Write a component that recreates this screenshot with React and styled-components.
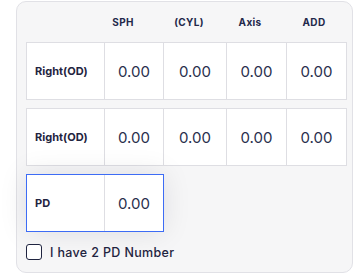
import React from "react";
import styled, { createGlobalStyle } from "styled-components";

const Global = createGlobalStyle`
  html, body { margin: 0; padding: 0; background: #ffffff; }
  body { font-family: Inter, "Noto Sans", sans-serif; color: #1f2440; }
`;

const Card = styled.div`
  box-sizing: border-box;
  margin: 1px 0 0 16px;
  width: 337px;
  height: 272px;
  border: 1px solid #e1e1e6;
  border-radius: 10px;
  background: #f6f6f7;
  padding: 0 5px 0 9px;
  display: flex;
  flex-direction: column;
`;

const HeaderRow = styled.div`
  display: grid;
  grid-template-columns: 64px 66px 66px 56px 72px;
  height: 40px;
  align-items: center;
`;

const HeadCell = styled.div`
  text-align: center;
  font-size: 10px;
  font-weight: 700;
  color: #23284a;
  letter-spacing: 0.3px;
`;

const Rows = styled.div`
  display: flex;
  flex-direction: column;
  gap: 8px;
`;

const Row = styled.div`
  box-sizing: border-box;
  display: grid;
  grid-template-columns: ${(p) => (p.$pd ? "77px 59px" : "77px 59px 63px 60px 60px")};
  width: ${(p) => (p.$pd ? "138px" : "321px")};
  height: 58px;
  background: #ffffff;
  border: 1px solid ${(p) => (p.$pd ? "#3d6cf5" : "#dedee3")};
  box-shadow: ${(p) => (p.$pd ? "0 0 28px rgba(20, 20, 40, 0.10)" : "none")};
`;

const LabelCell = styled.div`
  display: flex;
  align-items: center;
  padding-left: 8px;
  font-size: 11px;
  font-weight: 700;
  color: #1f2440;
`;

const ValueCell = styled.div`
  display: flex;
  align-items: center;
  justify-content: center;
  border-left: 1px solid #dedee3;
  font-size: 15px;
  font-weight: 400;
  color: #2a2f4d;
`;

const CheckRow = styled.label`
  display: flex;
  align-items: center;
  gap: 8px;
  margin-top: 12px;
  font-size: 12.5px;
  font-weight: 500;
  color: #1f2440;
  letter-spacing: 0.35px;
`;

const Box = styled.span`
  box-sizing: border-box;
  width: 16px;
  height: 16px;
  border: 1.5px solid #1f2440;
  border-radius: 3px;
  background: #ffffff;
`;

const cols = ["SPH", "(CYL)", "Axis", "ADD"];

export default function App() {
  return (
    <>
      <Global />
      <Card>
        <HeaderRow>
          <HeadCell />
          {cols.map((c) => (
            <HeadCell key={c}>{c}</HeadCell>
          ))}
        </HeaderRow>
        <Rows>
          {[0, 1].map((r) => (
            <Row key={r}>
              <LabelCell>Right(OD)</LabelCell>
              {cols.map((c) => (
                <ValueCell key={c}>0.00</ValueCell>
              ))}
            </Row>
          ))}
          <Row $pd>
            <LabelCell>PD</LabelCell>
            <ValueCell>0.00</ValueCell>
          </Row>
        </Rows>
        <CheckRow>
          <Box />
          I have 2 PD Number
        </CheckRow>
      </Card>
    </>
  );
}
